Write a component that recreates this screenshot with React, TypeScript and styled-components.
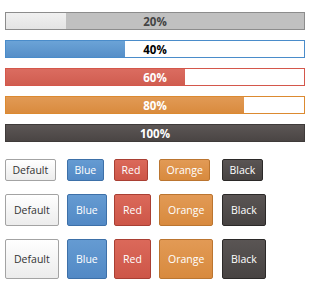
import React from "react";
import styled, { createGlobalStyle } from "styled-components";

const Global = createGlobalStyle`
  html, body { margin: 0; padding: 0; background: #fff; }
  body { font-family: "Open Sans", "Liberation Sans", sans-serif; }
`;

type Tone = "default" | "blue" | "red" | "orange" | "black";

const tones: Record<Tone, { border: string; top: string; bottom: string; track: string; text: string }> = {
  default: { border: "#8c8c8c", top: "#f0f0f0", bottom: "#e4e4e4", track: "#c0c0c0", text: "#444" },
  blue: { border: "#4a8cca", top: "#6ba3d7", bottom: "#568fc8", track: "#fff", text: "#000" },
  red: { border: "#d4574b", top: "#db6c60", bottom: "#d05d50", track: "#fff", text: "#fff" },
  orange: { border: "#dc8a30", top: "#e19a55", bottom: "#d98b3e", track: "#fff", text: "#fff" },
  black: { border: "#3f3b3a", top: "#5c5655", bottom: "#4a4544", track: "#fff", text: "#fff" },
};

const btnTones: Record<Tone, { border: string; top: string; bottom: string; text: string }> = {
  default: { border: "#a3a3a3", top: "#ffffff", bottom: "#ececec", text: "#333" },
  blue: { border: "#3d70a8", top: "#659bd2", bottom: "#5289c5", text: "#fff" },
  red: { border: "#a93f33", top: "#db695a", bottom: "#cd5648", text: "#fff" },
  orange: { border: "#bb7530", top: "#e29a55", bottom: "#d88a3e", text: "#fff" },
  black: { border: "#2b2928", top: "#5a5554", bottom: "#474342", text: "#fff" },
};

const Page = styled.div`
  padding: 12px 6px 0 5px;
  display: flex;
  flex-direction: column;
`;

const Bars = styled.div`
  display: flex;
  flex-direction: column;
  gap: 10px;
`;

const Track = styled.div<{ $tone: Tone }>`
  position: relative;
  width: 300px;
  height: 18px;
  box-sizing: border-box;
  border: 1px solid ${(p) => tones[p.$tone].border};
  background: ${(p) => tones[p.$tone].track};
`;

const Fill = styled.div<{ $tone: Tone }>`
  height: 100%;
  background: linear-gradient(${(p) => tones[p.$tone].top}, ${(p) => tones[p.$tone].bottom});
`;

const Label = styled.span<{ $tone: Tone }>`
  position: absolute;
  inset: 0;
  display: flex;
  align-items: center;
  justify-content: center;
  font-family: "Open Sans", "Liberation Sans", sans-serif;
  font-weight: 700;
  font-size: 11.5px;
  color: ${(p) => tones[p.$tone].text};
`;

const ButtonRows = styled.div`
  margin-top: 17px;
  display: flex;
  flex-direction: column;
  gap: 13px;
`;

const Row = styled.div`
  display: grid;
  grid-template-columns: 62px 47px 45px 63px auto;
  align-items: start;
`;

type Size = "sm" | "md" | "lg";
const sizes: Record<Size, { h: number; px: number }> = {
  sm: { h: 22, px: 6.5 },
  md: { h: 32, px: 8 },
  lg: { h: 40, px: 8 },
};

const Btn = styled.button<{ $tone: Tone; $size: Size }>`
  justify-self: start;
  box-sizing: border-box;
  height: ${(p) => sizes[p.$size].h}px;
  padding: 0 ${(p) => sizes[p.$size].px}px;
  border: 1px solid ${(p) => btnTones[p.$tone].border};
  border-radius: 2px;
  background: linear-gradient(${(p) => btnTones[p.$tone].top}, ${(p) => btnTones[p.$tone].bottom});
  color: ${(p) => btnTones[p.$tone].text};
  font-family: "Open Sans", "Liberation Sans", sans-serif;
  font-size: 10.5px;
  line-height: 1;
  cursor: pointer;
`;

const bars: { tone: Tone; value: number }[] = [
  { tone: "default", value: 20 },
  { tone: "blue", value: 40 },
  { tone: "red", value: 60 },
  { tone: "orange", value: 80 },
  { tone: "black", value: 100 },
];

const buttons: { tone: Tone; label: string }[] = [
  { tone: "default", label: "Default" },
  { tone: "blue", label: "Blue" },
  { tone: "red", label: "Red" },
  { tone: "orange", label: "Orange" },
  { tone: "black", label: "Black" },
];

export default function App() {
  return (
    <>
      <Global />
      <Page>
        <Bars>
          {bars.map((b) => (
            <Track key={b.value} $tone={b.tone}>
              <Fill $tone={b.tone} style={{ width: `${b.value}%` }} />
              <Label $tone={b.tone}>{b.value}%</Label>
            </Track>
          ))}
        </Bars>
        <ButtonRows>
          {(["sm", "md", "lg"] as Size[]).map((s) => (
            <Row key={s}>
              {buttons.map((b) => (
                <Btn key={b.label} $tone={b.tone} $size={s}>
                  {b.label}
                </Btn>
              ))}
            </Row>
          ))}
        </ButtonRows>
      </Page>
    </>
  );
}
